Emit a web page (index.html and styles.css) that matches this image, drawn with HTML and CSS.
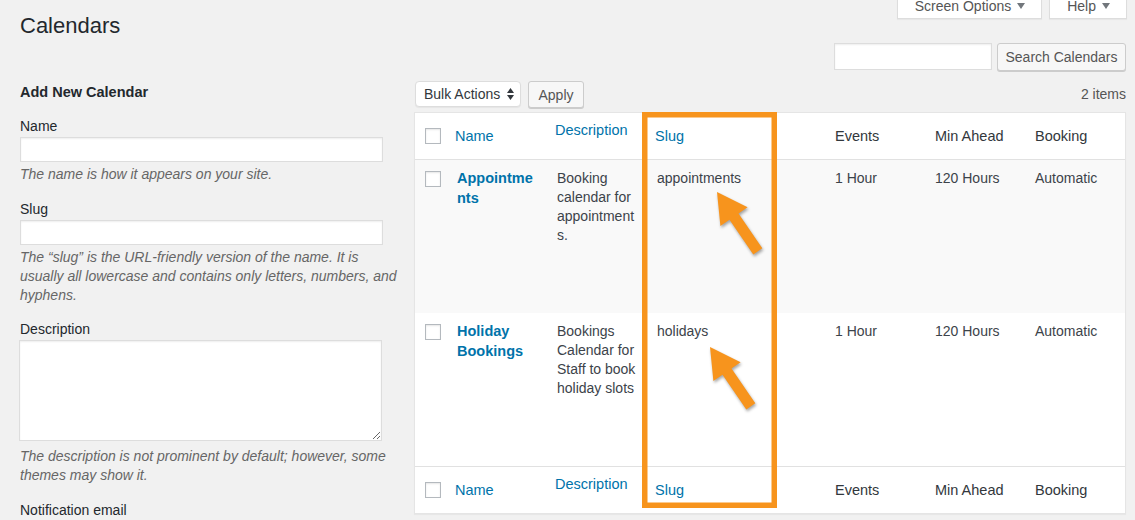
FILE: index.html
```html
<!DOCTYPE html>
<html>
<head>
<meta name="viewport" content="width=device-width, initial-scale=1">
<link rel="stylesheet" href="styles.css">
</head>
<body>
<div class="wrap">

  <div class="top">
    <h1 class="page-title">Calendars</h1>
    <div class="meta-tabs">
      <div class="meta-tab">Screen Options <svg class="caret" width="8" height="6" viewBox="0 0 8 6"><polygon points="0,0 8,0 4,6"/></svg></div>
      <div class="meta-tab">Help <svg class="caret" width="8" height="6" viewBox="0 0 8 6"><polygon points="0,0 8,0 4,6"/></svg></div>
    </div>
  </div>

  <div class="search-row">
    <input class="search-input" type="text">
    <button class="button search-button">Search Calendars</button>
  </div>

  <div class="columns">
    <div class="col-left">
      <h2 class="form-title">Add New Calendar</h2>

      <div class="form-field">
        <label>Name</label>
        <input class="text-input" type="text">
        <p class="help">The name is how it appears on your site.</p>
      </div>

      <div class="form-field">
        <label>Slug</label>
        <input class="text-input" type="text">
        <p class="help">The “slug” is the URL-friendly version of the name. It is usually all lowercase and contains only letters, numbers, and hyphens.</p>
      </div>

      <div class="form-field">
        <label>Description</label>
        <textarea class="text-area"></textarea>
        <p class="help help-area">The description is not prominent by default; however, some themes may show it.</p>
      </div>

      <div class="form-field">
        <label>Notification email</label>
      </div>
    </div>

    <div class="col-right">
      <div class="tablenav">
        <div class="actions">
          <div class="select">Bulk Actions
            <svg width="7" height="12" viewBox="0 0 7 12"><polygon points="3.5,0 7,5 0,5"/><polygon points="0,7 7,7 3.5,12"/></svg>
          </div>
          <button class="button apply-button">Apply</button>
        </div>
        <div class="item-count">2 items</div>
      </div>

      <table class="list-table">
        <colgroup>
          <col style="width:30px">
          <col style="width:100px">
          <col style="width:100px">
          <col style="width:180px">
          <col style="width:100px">
          <col style="width:100px">
          <col style="width:100px">
        </colgroup>
        <thead>
          <tr>
            <th class="check-col"><input class="check" type="checkbox"></th>
            <th><span class="sort-link">Name</span></th>
            <th class="desc-head"><span class="sort-link">Description</span></th>
            <th><span class="sort-link">Slug</span></th>
            <th>Events</th>
            <th>Min Ahead</th>
            <th>Booking</th>
          </tr>
        </thead>
        <tbody>
          <tr class="alt">
            <td class="check-col"><input class="check" type="checkbox"></td>
            <td class="title-col"><strong class="row-title">Appointments</strong></td>
            <td class="wide-col">Booking calendar for appointments.</td>
            <td class="wide-col">appointments</td>
            <td>1 Hour</td>
            <td>120 Hours</td>
            <td>Automatic</td>
          </tr>
          <tr>
            <td class="check-col"><input class="check" type="checkbox"></td>
            <td class="title-col"><strong class="row-title">Holiday Bookings</strong></td>
            <td class="wide-col">Bookings Calendar for Staff to book holiday slots</td>
            <td class="wide-col">holidays</td>
            <td>1 Hour</td>
            <td>120 Hours</td>
            <td>Automatic</td>
          </tr>
        </tbody>
        <tfoot>
          <tr>
            <th class="check-col"><input class="check" type="checkbox"></th>
            <th><span class="sort-link">Name</span></th>
            <th class="desc-head"><span class="sort-link">Description</span></th>
            <th><span class="sort-link">Slug</span></th>
            <th>Events</th>
            <th>Min Ahead</th>
            <th>Booking</th>
          </tr>
        </tfoot>
      </table>

      <!-- highlight drawn over the slug column -->
      <svg class="highlight" width="712" height="449" viewBox="0 0 712 449">
        <rect class="frame" x="230.75" y="43.75" width="129.5" height="390.5"/>
        <polygon class="arrow" points="303,121 333.6,136.3 324.5,142.6 348.3,177.2 339.3,183.4 315.5,148.8 306.4,155.1"/>
        <polygon class="arrow" points="296,276 326.6,291.3 317.5,297.6 341.3,332.2 332.3,338.4 308.5,303.8 299.4,310.1"/>
      </svg>
    </div>
  </div>

</div>
</body>
</html>
```

FILE: styles.css
```css
* {
  box-sizing: border-box;
}

html, body {
  overflow: hidden;
}

body {
  margin: 0;
  background: #f1f1f1;
  font-family: "Liberation Sans", Arial, sans-serif;
  font-size: 14px;
  color: #444;
}

.wrap {
  padding: 0 9px 0 20px;
}

/* header */
.top {
  display: flex;
  justify-content: space-between;
  align-items: flex-start;
}

.page-title {
  margin: 11px 0 0;
  font-size: 22px;
  line-height: 29px;
  font-weight: 400;
  color: #23282d;
}

.meta-tabs {
  display: flex;
  gap: 7px;
  margin: -6px -1px 0 0;
}

.meta-tab {
  display: flex;
  align-items: center;
  gap: 6px;
  height: 25px;
  padding: 0 16px 0 17px;
  background: #fff;
  border: 1px solid #ddd;
  border-top: 0;
  color: #555;
  box-shadow: 0 1px 1px rgba(0,0,0,.04);
}

.caret {
  fill: #72777c;
}

/* search */
.search-row {
  display: flex;
  justify-content: flex-end;
  align-items: flex-start;
  gap: 5px;
  margin-top: 3px;
}

.search-input {
  width: 158px;
  height: 27px;
  margin: 0;
  border: 1px solid #ddd;
  background: #fff;
  box-shadow: inset 0 1px 2px rgba(0,0,0,.07);
}

.button {
  height: 28px;
  margin: 0;
  padding: 0;
  border: 1px solid #ccc;
  border-radius: 3px;
  background: #f7f7f7;
  box-shadow: 0 1px 0 #ccc;
  color: #555;
  font-family: inherit;
  font-size: 14px;
}

.search-button {
  width: 129px;
}

.apply-button {
  width: 56px;
  height: 27px;
}

/* columns */
.columns {
  display: flex;
  gap: 14px;
}

.col-left {
  width: 380px;
  flex: none;
}

.col-right {
  flex: 1;
  position: relative;
}

/* add form */
.form-title {
  margin: 11px 0 15px;
  font-size: 14.5px;
  line-height: 20px;
  font-weight: 700;
  color: #23282d;
}

.form-field {
  margin-bottom: 15.5px;
}

.form-field label {
  display: block;
  line-height: 19px;
  color: #23282d;
}

.text-input {
  display: block;
  width: 363px;
  height: 25px;
  margin: 1px 0 0;
  border: 1px solid #ddd;
  background: #fff;
  box-shadow: inset 0 1px 2px rgba(0,0,0,.07);
}

.text-area {
  display: block;
  width: 363px;
  height: 101px;
  margin: 1px 0 0 -1px;
  border: 1px solid #ddd;
  background: #fff;
  box-shadow: inset 0 1px 2px rgba(0,0,0,.07);
}

.help {
  margin: 3px 0 0;
  line-height: 19px;
  font-style: italic;
  color: #666;
}

.help-area {
  margin-top: 6px;
}

/* table nav */
.tablenav {
  display: flex;
  justify-content: space-between;
  align-items: flex-start;
  height: 27px;
  margin: 10px 0 4px;
}

.actions {
  display: flex;
  align-items: flex-start;
  gap: 7px;
  padding-left: 1px;
}

.select {
  display: flex;
  align-items: center;
  justify-content: space-between;
  width: 106px;
  height: 26px;
  padding: 0 6px 0 8px;
  background: #fff;
  border: 1px solid #ddd;
  border-radius: 4px;
  box-shadow: 0 1px 1px rgba(0,0,0,.05);
  color: #32373c;
}

.select svg {
  fill: #32373c;
}

.item-count {
  line-height: 27px;
  color: #555;
}

/* list table */
.list-table {
  width: 100%;
  table-layout: fixed;
  border-collapse: separate;
  border-spacing: 0;
  background: #fff;
  border: 1px solid #e5e5e5;
  box-shadow: 0 1px 1px rgba(0,0,0,.04);
}

.list-table th {
  height: 47px;
  padding: 0 10px;
  text-align: left;
  font-weight: 400;
  font-size: 14.5px;
  line-height: 20px;
  color: #32373c;
  vertical-align: middle;
}

.list-table thead th {
  border-bottom: 1px solid #e1e1e1;
}

.list-table tfoot th {
  border-top: 1px solid #e1e1e1;
}

.list-table th.desc-head {
  padding-bottom: 12px;
}

.sort-link {
  color: #0073aa;
}

.list-table tbody tr {
  height: 153px;
}

.list-table tbody tr.alt {
  background: #f9f9f9;
}

.list-table td {
  padding: 9px 10px 0;
  vertical-align: top;
  line-height: 19px;
  color: #3c434a;
  overflow-wrap: anywhere;
}

.list-table td.wide-col {
  padding: 9px 8px 0 12px;
}

.list-table td.title-col {
  padding: 8px 8px 0 12px;
  line-height: 20px;
}

.list-table td.check-col {
  padding-top: 11px;
}

.row-title {
  color: #0073aa;
  font-size: 14.5px;
  font-weight: 700;
}

.check {
  -webkit-appearance: none;
  appearance: none;
  display: block;
  width: 16px;
  height: 16px;
  margin: 0;
  border: 1px solid #b4b9be;
  background: #fff;
  box-shadow: inset 0 1px 2px rgba(0,0,0,.1);
}

/* orange annotation */
.highlight {
  position: absolute;
  left: 0;
  top: 0;
  pointer-events: none;
}

.frame {
  fill: none;
  stroke: #f7941d;
  stroke-width: 5.5;
}

.arrow {
  fill: #f7941d;
  filter: drop-shadow(1px 2px 1.5px rgba(0,0,0,.35));
}
```
